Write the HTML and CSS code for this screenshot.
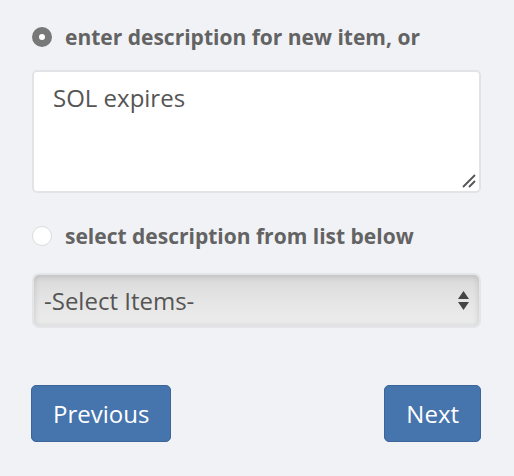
FILE: index.html
```html
<!DOCTYPE html>
<html>
<head>
<meta charset="utf-8">
<link rel="stylesheet" href="styles.css">
</head>
<body>
<div class="form">
  <label class="opt">
    <span class="radio checked"></span>
    <span class="opt-text">enter description for new item, or</span>
  </label>
  <div class="textarea">
    <span class="ta-text">SOL expires</span>
    <svg class="grip" width="14" height="14" viewBox="0 0 14 14"><path d="M13 1 L1 13 M13 7 L7 13" stroke="#555" stroke-width="1.8" fill="none"/></svg>
  </div>
  <label class="opt opt2">
    <span class="radio"></span>
    <span class="opt-text">select description from list below</span>
  </label>
  <div class="select">
    <span class="sel-text">-Select Items-</span>
    <svg class="arrows" width="11" height="21" viewBox="0 0 11 21"><path d="M5.5 1 L11 9 L0 9 Z M0 12 L11 12 L5.5 20 Z" fill="#444"/></svg>
  </div>
  <div class="buttons">
    <button class="btn">Previous</button>
    <button class="btn">Next</button>
  </div>
</div>
</body>
</html>
```

FILE: styles.css
```css
html, body {
  margin: 0;
  padding: 0;
  background: #f1f2f6;
}
body {
  font-family: "Open Sans", "Liberation Sans", sans-serif;
  color: #555;
}
.form {
  width: 450px;
  padding: 23px 0 0 31px;
  display: flex;
  flex-direction: column;
}
.opt {
  display: flex;
  align-items: center;
  height: 28px;
  margin-left: 1px;
}
.opt2 {
  margin-top: 29px;
}
.radio {
  width: 20px;
  height: 20px;
  border-radius: 50%;
  background: #fff;
  border: 1px solid #dcdcdc;
  box-sizing: border-box;
  flex: none;
}
.radio.checked {
  background: #fff;
  border: 7px solid #787878;
}
.opt-text {
  margin-left: 13px;
  font-size: 21px;
  font-weight: bold;
  color: #636363;
}
.textarea {
  margin-top: 19px;
  margin-left: 1px;
  height: 123px;
  box-sizing: border-box;
  border: 2px solid #e2e3e6;
  border-radius: 5px;
  background: #fff;
  position: relative;
  padding: 9px 19px;
}
.ta-text {
  font-size: 24px;
  color: #555;
}
.grip {
  position: absolute;
  right: 3px;
  bottom: 3px;
}
.select {
  margin-top: 23px;
  margin-left: 1px;
  height: 55px;
  box-sizing: border-box;
  border: 2px solid #e4e5e8;
  border-radius: 7px;
  background: linear-gradient(#d9d9d9, #e6e6e6 55%, #ececec);
  box-shadow: inset 0 1px 6px rgba(0,0,0,0.15);
  display: flex;
  align-items: center;
  padding: 0 10px 0 10px;
}
.sel-text {
  flex: 1;
  font-size: 24px;
  color: #555;
}
.buttons {
  margin-top: 57px;
  display: flex;
  justify-content: space-between;
}
.btn {
  height: 57px;
  padding: 0 21px;
  background: #4674ad;
  border: 1px solid #3c659a;
  border-radius: 5px;
  color: #fff;
  font-family: "Open Sans", "Liberation Sans", sans-serif;
  font-size: 24px;
}
```
